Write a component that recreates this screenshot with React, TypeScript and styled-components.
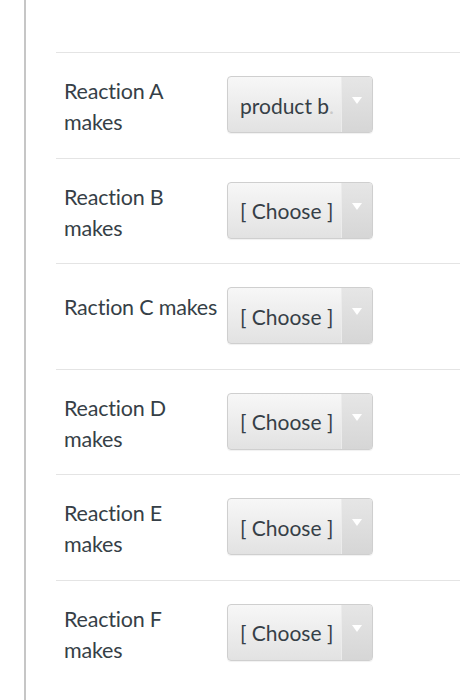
import React from "react";
import styled, { createGlobalStyle } from "styled-components";

const GlobalStyle = createGlobalStyle`
  html, body {
    margin: 0;
    padding: 0;
    background: #ffffff;
  }
  body {
    font-family: Lato, "Noto Sans", "Liberation Sans", sans-serif;
    color: #2d3b45;
  }
`;

const Page = styled.div`
  padding-left: 24px;
  min-height: 700px;
  box-sizing: border-box;
`;

const Panel = styled.div`
  border-left: 2px solid #c6c6c6;
  min-height: 700px;
  padding-left: 30px;
  padding-top: 52px;
  box-sizing: border-box;
`;

const Row = styled.div`
  display: flex;
  align-items: flex-start;
  height: 105.5px;
  box-sizing: border-box;
  border-top: 1.5px solid #e4e4e4;
  padding-left: 8px;
  padding-top: 23px;
`;

const Label = styled.div<{ $single?: boolean }>`
  width: 163px;
  flex: 0 0 163px;
  font-size: 21.5px;
  line-height: 31px;
  white-space: nowrap;
  margin-top: ${({ $single }) => ($single ? "4.5px" : "0px")};
  letter-spacing: -0.2px;
  color: #363f47;
`;

const Select = styled.div`
  display: flex;
  width: 146px;
  height: 57px;
  box-sizing: border-box;
  border: 1px solid #cfcfcf;
  border-radius: 4px;
  overflow: hidden;
  background: linear-gradient(#f7f7f7, #e2e2e2);
  box-shadow: 0 1px 1px rgba(0, 0, 0, 0.06);
`;

const Value = styled.div`
  flex: 1;
  display: flex;
  align-items: center;
  padding-left: 12px;
  padding-top: 1px;
  font-size: 21px;
  color: #363f47;
  white-space: nowrap;
  overflow: hidden;
`;

const Fade = styled.span`
  color: #c9c9c9;
`;

const Arrow = styled.div`
  flex: 0 0 31px;
  display: flex;
  justify-content: center;
  padding-top: 20px;
  box-sizing: border-box;
  background: linear-gradient(#e6e6e6, #d6d6d6);
  border-left: 1px solid #ececec;
`;

const Triangle = styled.div`
  width: 0;
  height: 0;
  border-left: 5px solid transparent;
  border-right: 5px solid transparent;
  border-top: 7px solid #ffffff;
`;

type Item = { lines: string[]; value: string };

const items: Item[] = [
  { lines: ["Reaction A", "makes"], value: "product b" },
  { lines: ["Reaction B", "makes"], value: "[ Choose ]" },
  { lines: ["Raction C makes"], value: "[ Choose ]" },
  { lines: ["Reaction D", "makes"], value: "[ Choose ]" },
  { lines: ["Reaction E", "makes"], value: "[ Choose ]" },
  { lines: ["Reaction F", "makes"], value: "[ Choose ]" },
];

export default function App() {
  return (
    <>
      <GlobalStyle />
      <Page>
        <Panel>
          {items.map((item, i) => (
            <Row key={i}>
              <Label $single={item.lines.length === 1}>
                {item.lines.map((l, j) => (
                  <div key={j}>{l}</div>
                ))}
              </Label>
              <Select>
                <Value>
                  {item.value}
                  {i === 0 && <Fade>.</Fade>}
                </Value>
                <Arrow>
                  <Triangle />
                </Arrow>
              </Select>
            </Row>
          ))}
        </Panel>
      </Page>
    </>
  );
}
